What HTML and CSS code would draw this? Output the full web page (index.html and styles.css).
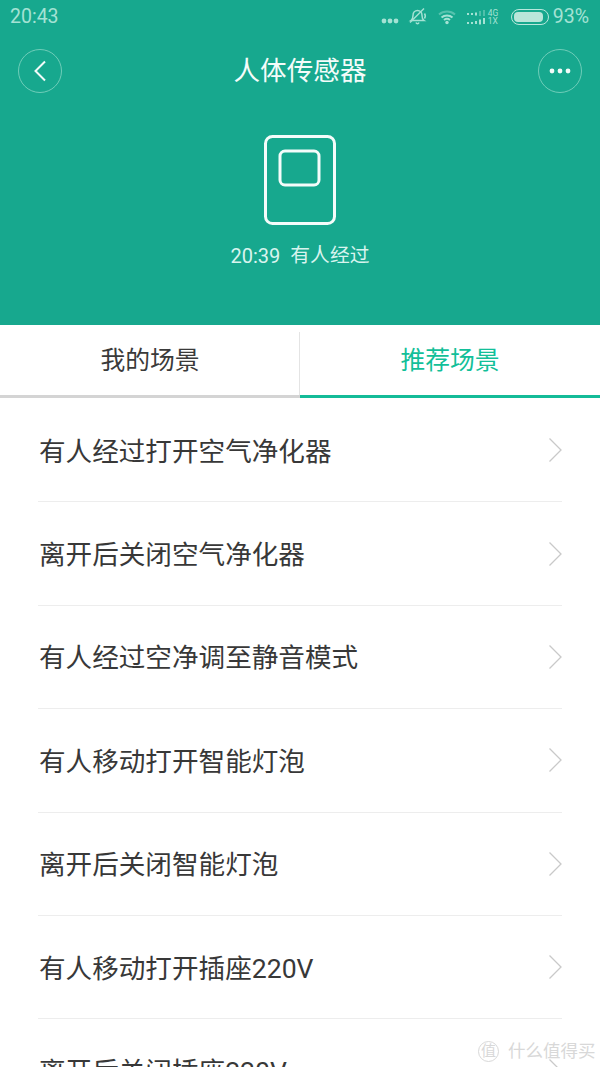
FILE: index.html
```html
<!DOCTYPE html>
<html lang="zh">
<head>
<meta charset="utf-8">
<title>人体传感器</title>
<link rel="stylesheet" href="styles.css">
</head>
<body>
<div class="page">
  <header class="hero">
    <div class="status">
      <span class="clock">20:43</span>
      <div class="status-right">
        <svg class="s-dots" width="18" height="6" viewBox="0 0 18 6"><circle cx="3" cy="3" r="2.400"/><circle cx="9" cy="3" r="2.400"/><circle cx="15" cy="3" r="2.400"/></svg>
        <svg class="s-bell" width="20" height="20" viewBox="0 0 20 20" fill="none"><path d="M3 13.500c1.500-1 2-2.500 2-5 0-3 2-5 4.500-5s4.500 2 4.500 5c0 2.500.5 4 2 5z"/><path d="M8 15.500c.5 1.500 2.500 1.500 3 0"/><path d="M2 15.500 16 1.500"/><path d="M16.500 6.500c1 1.500 1 3.500 0 5"/></svg>
        <svg class="s-wifi" width="18" height="16" viewBox="0 0 18 16" fill="none"><path d="M1 5.500c4.500-4 11.500-4 16 0" opacity=".45"/><path d="M3.500 8.500c3-2.700 8-2.700 11 0"/><path d="M6 11c1.700-1.400 4.300-1.400 6 0"/><circle class="fill" cx="9" cy="13.500" r="1.700"/></svg>
        <div class="s-signal">
          <svg width="22" height="16" viewBox="0 0 22 16"><rect x="0" y="4" width="2" height="2"/><rect x="4" y="4" width="2" height="2"/><rect x="8" y="3.500" width="2" height="3"/><rect x="12" y="2" width="2" height="5" opacity=".4"/><rect x="16" y="1" width="2" height="6" opacity=".4"/><rect x="0" y="13" width="2" height="2"/><rect x="4" y="13" width="2" height="2"/><rect x="8" y="12" width="2" height="3"/><rect x="12" y="10.500" width="2" height="5"/><rect x="16" y="9" width="2" height="6"/></svg>
          <div class="s-net"><span>4G</span><span>1X</span></div>
        </div>
        <div class="battery"><span class="battery-fill"></span></div>
        <span class="percent">93%</span>
      </div>
    </div>
    <div class="topbar">
      <button class="round" type="button" aria-label="返回">
        <svg width="16" height="24" viewBox="0 0 16 24" fill="none"><path d="M13 2.500 3.500 12 13 21.500"/></svg>
      </button>
      <h1 class="title">人体传感器</h1>
      <button class="round" type="button" aria-label="更多">
        <svg class="more" width="22" height="6" viewBox="0 0 22 6"><circle cx="3" cy="3" r="2.400"/><circle cx="11" cy="3" r="2.400"/><circle cx="19" cy="3" r="2.400"/></svg>
      </button>
    </div>
    <div class="device">
      <svg width="72" height="90" viewBox="0 0 72 90" fill="none"><rect x="1.500" y="1.500" width="69" height="87" rx="7"/><rect x="16" y="16" width="39" height="34" rx="5"/></svg>
    </div>
    <p class="event"><span class="event-time">20:39</span><span>有人经过</span></p>
  </header>
  <nav class="tabs">
    <div class="tab">我的场景</div>
    <div class="tab tab-active">推荐场景</div>
  </nav>
  <ul class="list">
    <li class="row"><span class="row-label">有人经过打开空气净化器</span><svg class="chev" width="15" height="26" viewBox="0 0 15 26" fill="none"><path d="M1.500 1.500 13 13 1.500 24.500"/></svg></li>
    <li class="row"><span class="row-label">离开后关闭空气净化器</span><svg class="chev" width="15" height="26" viewBox="0 0 15 26" fill="none"><path d="M1.500 1.500 13 13 1.500 24.500"/></svg></li>
    <li class="row"><span class="row-label">有人经过空净调至静音模式</span><svg class="chev" width="15" height="26" viewBox="0 0 15 26" fill="none"><path d="M1.500 1.500 13 13 1.500 24.500"/></svg></li>
    <li class="row"><span class="row-label">有人移动打开智能灯泡</span><svg class="chev" width="15" height="26" viewBox="0 0 15 26" fill="none"><path d="M1.500 1.500 13 13 1.500 24.500"/></svg></li>
    <li class="row"><span class="row-label">离开后关闭智能灯泡</span><svg class="chev" width="15" height="26" viewBox="0 0 15 26" fill="none"><path d="M1.500 1.500 13 13 1.500 24.500"/></svg></li>
    <li class="row"><span class="row-label">有人移动打开插座220V</span><svg class="chev" width="15" height="26" viewBox="0 0 15 26" fill="none"><path d="M1.500 1.500 13 13 1.500 24.500"/></svg></li>
    <li class="row"><span class="row-label">离开后关闭插座220V</span><svg class="chev" width="15" height="26" viewBox="0 0 15 26" fill="none"><path d="M1.500 1.500 13 13 1.500 24.500"/></svg></li>
  </ul>
  <div class="watermark"><span class="wm-badge">值</span><span>什么值得买</span></div>
</div>
</body>
</html>
```
FILE: styles.css
```css
* { box-sizing: border-box; }
html, body { margin: 0; padding: 0; }
body {
  width: 600px;
  height: 1067px;
  overflow: hidden;
  background: #fff;
  font-family: Roboto, "Noto Sans CJK SC", sans-serif;
}
.page { position: relative; width: 600px; height: 1067px; overflow: hidden; }

.hero { height: 325px; background: #17a88e; color: #fff; }
.status {
  height: 34px;
  padding: 0 11px 0 10px;
  display: flex;
  align-items: center;
  justify-content: space-between;
  color: #a4e2d4;
}
.clock { font-size: 19.500px; line-height: 34px; }
.status-right { display: flex; align-items: center; }
.s-dots { fill: #a4e2d4; margin-right: 9px; margin-top: 8px; }
.s-bell { stroke: #a4e2d4; stroke-width: 1.500; margin-right: 10px; }
.s-wifi { stroke: #a4e2d4; stroke-width: 2; margin-right: 11px; }
.s-wifi .fill { fill: #a4e2d4; stroke: none; }
.s-signal { display: flex; align-items: center; margin-right: 8px; }
.s-signal svg { fill: #a4e2d4; }
.s-net {
  display: flex;
  flex-direction: column;
  width: 15px;
  margin-left: -1px;
  font-size: 8.500px;
  line-height: 8.500px;
}
.battery {
  width: 38px;
  height: 16px;
  border: 1.500px solid #b8e8dd;
  border-radius: 8px;
  padding: 2px;
  margin-right: 4px;
}
.battery-fill { display: block; width: 92%; height: 100%; border-radius: 4px; background: #b9e6da; }
.percent { font-size: 19.500px; line-height: 34px; }

.topbar {
  height: 44px;
  margin-top: 15px;
  padding: 0 18px;
  display: flex;
  align-items: center;
  justify-content: space-between;
}
.round {
  width: 44px;
  height: 44px;
  padding: 0;
  border: 1px solid #6fcdb9;
  border-radius: 50%;
  background: none;
  display: flex;
  align-items: center;
  justify-content: center;
}
.round svg { stroke: #f2fbf9; stroke-width: 2; }
.round .more { fill: #f2fbf9; stroke: none; }
.title { margin: 0; font-size: 26.600px; font-weight: 400; line-height: 44px; color: #f4fcfa; }

.device { height: 90px; margin-top: 42px; display: flex; justify-content: center; }
.device svg { stroke: #f4fcfa; stroke-width: 3; }
.event {
  margin: 17px 0 0;
  display: flex;
  justify-content: center;
  gap: 10px;
  font-size: 19.800px;
  line-height: 28px;
  color: #d8f4ee;
}
.event-time { font-size: 20px; }

.tabs { height: 73px; display: flex; }
.tab {
  position: relative;
  flex: 1;
  display: flex;
  align-items: center;
  justify-content: center;
  padding-bottom: 4px;
  border-bottom: 3px solid #d4d4d4;
  font-size: 24.800px;
  color: #3a3a3a;
}
.tab-active { border-bottom-color: #14bb98; color: #12bf99; }
.tab-active::before {
  content: "";
  position: absolute;
  left: -1px;
  top: 7px;
  bottom: 0;
  width: 1px;
  background: #e4e4e4;
}

.list { margin: 0; padding: 1px 38px 0; list-style: none; }
.row {
  height: 103.400px;
  display: flex;
  align-items: center;
  justify-content: space-between;
  padding-bottom: 2px;
  border-bottom: 1px solid #ededed;
  font-size: 26.600px;
  color: #383838;
}
.row-label { margin-left: 1px; }
.chev { stroke: #c9c9c9; stroke-width: 1.300; margin: 2px -1px 0 0; }

.watermark {
  position: absolute;
  left: 478px;
  top: 1039px;
  display: flex;
  align-items: center;
  gap: 9px;
  font-size: 17.500px;
  line-height: 24px;
  color: #d8d8d8;
}
.wm-badge {
  width: 21px;
  height: 21px;
  border: 1px solid #d8d8d8;
  border-radius: 50%;
  font-size: 15px;
  line-height: 19px;
  text-align: center;
}
```
